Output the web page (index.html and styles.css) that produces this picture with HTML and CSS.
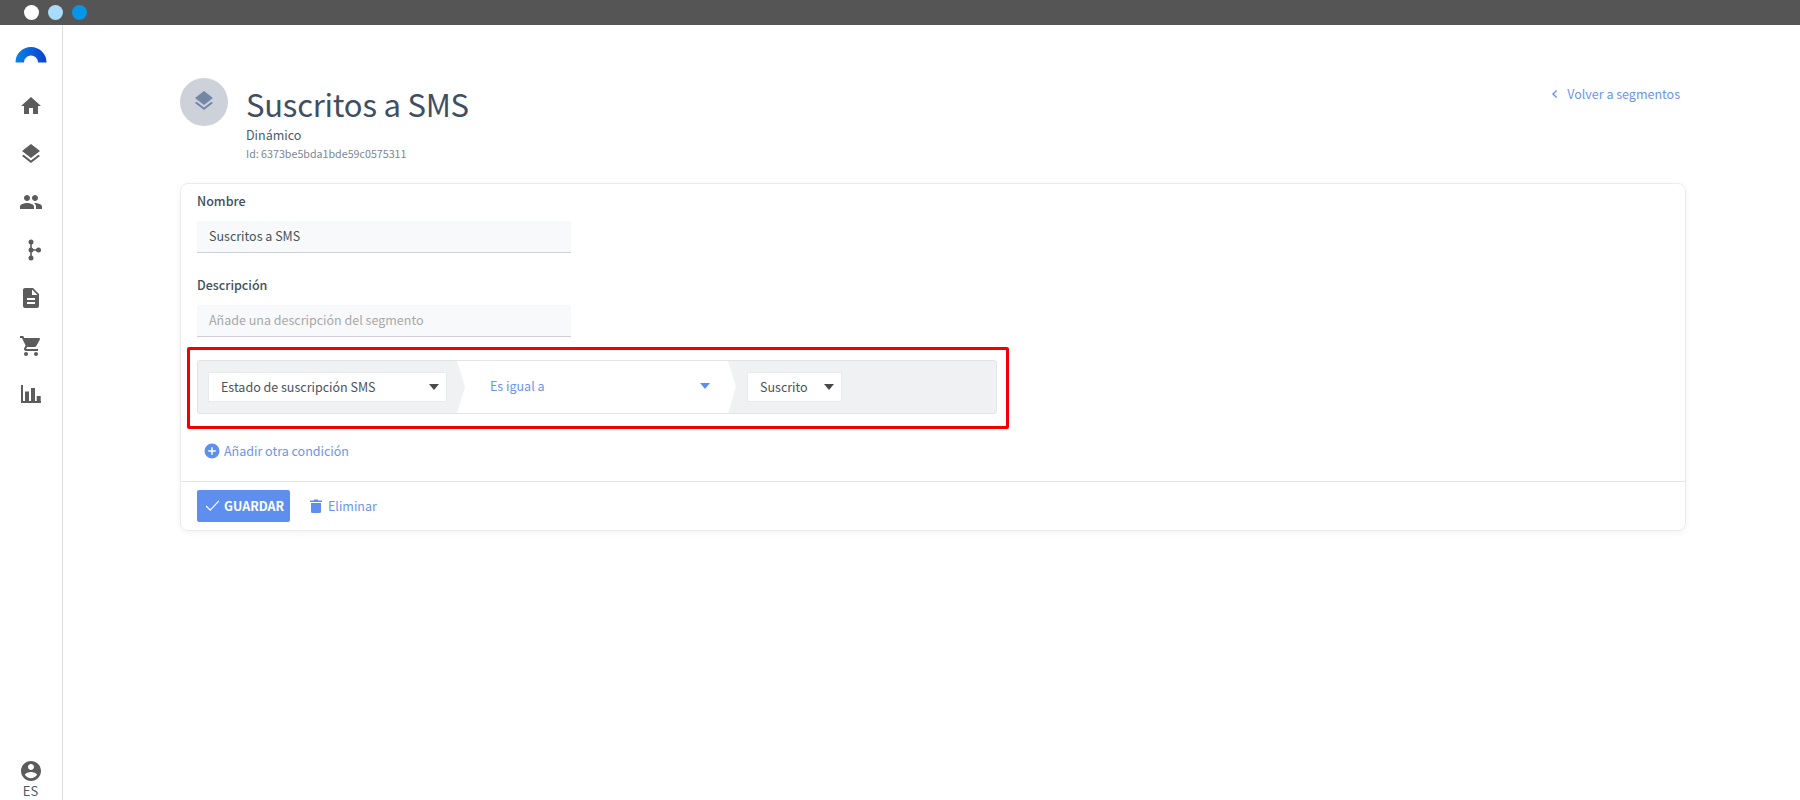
FILE: index.html
```html
<!DOCTYPE html>
<html lang="es">
<head>
<meta charset="utf-8">
<title>Suscritos a SMS</title>
<link rel="stylesheet" href="styles.css">
</head>
<body>
<div class="topbar"><span class="dot dot-white"></span><span class="dot dot-light"></span><span class="dot dot-blue"></span></div>
<div class="app">
  <nav class="sidebar">
    <svg class="logo" viewBox="0 0 32 17" width="32" height="17"><defs><linearGradient id="lg" x1="0" x2="1" y1="0" y2="0"><stop offset="0" stop-color="#0a84e6"/><stop offset="1" stop-color="#0a3fd0"/></linearGradient></defs><path d="M0.5 16.5A15.5 15.5 0 0 1 31.5 16.5H23A7 7 0 0 0 9 16.5Z" fill="url(#lg)"/></svg>
    <div class="nav-items">
      <svg class="nav-icon" viewBox="0 0 24 24"><path d="M10 20v-6h4v6h5v-8h3L12 3 2 12h3v8z"/></svg>
      <svg class="nav-icon" viewBox="0 0 24 24"><path d="M11.99 18.54l-7.37-5.73L3 14.07l9 7 9-7-1.63-1.27-7.38 5.74zM12 16l7.36-5.73L21 9l-9-7-9 7 1.63 1.27L12 16z"/></svg>
      <svg class="nav-icon" viewBox="0 0 24 24"><path d="M16 11c1.66 0 2.99-1.34 2.99-3S17.66 5 16 5c-1.66 0-3 1.34-3 3s1.34 3 3 3zm-8 0c1.66 0 2.99-1.34 2.99-3S9.66 5 8 5C6.34 5 5 6.34 5 8s1.34 3 3 3zm0 2c-2.33 0-7 1.17-7 3.5V19h14v-2.5c0-2.33-4.67-3.5-7-3.5zm8 0c-.29 0-.62.02-.97.05 1.16.84 1.97 1.97 1.97 3.45V19h6v-2.5c0-2.33-4.67-3.5-7-3.5z"/></svg>
      <svg class="nav-icon" viewBox="0 0 24 24"><circle cx="12" cy="4" r="2.5"/><circle cx="12" cy="12" r="2.5"/><circle cx="12" cy="20" r="2.5"/><circle cx="19.5" cy="12" r="2.5"/><path d="M11.2 4h1.600v16h-1.600zM12 11.200h7.500v1.600H12z"/></svg>
      <svg class="nav-icon" viewBox="0 0 24 24"><path d="M14 2H6c-1.100 0-2 .9-2 2v16c0 1.100.9 2 2 2h12c1.100 0 2-.9 2-2V8l-6-6zm2 16H8v-2h8v2zm0-4H8v-2h8v2zm-3-5V3.500L18.500 9H13z"/></svg>
      <svg class="nav-icon" viewBox="0 0 24 24"><path d="M7 18c-1.100 0-1.990.9-1.990 2S5.900 22 7 22s2-.9 2-2-.9-2-2-2zM1 2v2h2l3.600 7.590-1.350 2.450c-.16.280-.25.610-.25.960 0 1.100.9 2 2 2h12v-2H7.420c-.14 0-.25-.110-.25-.250l.03-.120.9-1.630h7.450c.75 0 1.410-.410 1.750-1.030l3.580-6.490A1 1 0 0 0 20.010 4H5.210l-.94-2H1zm16 16c-1.100 0-1.990.9-1.990 2s.89 2 1.990 2 2-.9 2-2-.9-2-2-2z"/></svg>
      <svg class="nav-icon" viewBox="0 0 24 24"><path d="M2 3h2v16h18v2H2zM6 9.600h4V19H6zM12 6h4v13h-4zM17.700 14h4v5h-4z"/></svg>
    </div>
    <div class="account">
      <svg class="nav-icon" viewBox="0 0 24 24"><path d="M12 2C6.480 2 2 6.480 2 12s4.480 10 10 10 10-4.480 10-10S17.520 2 12 2zm0 3c1.660 0 3 1.340 3 3s-1.340 3-3 3-3-1.340-3-3 1.340-3 3-3zm0 14.200c-2.500 0-4.710-1.280-6-3.220.03-1.990 4-3.080 6-3.080 1.990 0 5.970 1.090 6 3.080-1.290 1.940-3.500 3.220-6 3.220z"/></svg>
      <span class="lang">ES</span>
    </div>
  </nav>
  <main class="content">
    <header class="page-header">
      <div class="avatar"><svg viewBox="0 0 24 24" width="24" height="24"><path d="M11.990 18.540l-7.370-5.730L3 14.070l9 7 9-7-1.630-1.270-7.380 5.740zM12 16l7.360-5.730L21 9l-9-7-9 7 1.630 1.270L12 16z"/></svg></div>
      <div class="titles">
        <h1>Suscritos a SMS</h1>
        <div class="subtype">Dinámico</div>
        <div class="seg-id">Id: 6373be5bda1bde59c0575311</div>
      </div>
      <a class="back"><svg viewBox="0 0 10 12" width="8" height="10"><path d="M7 1.500L2.500 6 7 10.500" fill="none" stroke="currentColor" stroke-width="1.800"/></svg>Volver a segmentos</a>
    </header>
    <section class="card">
      <div class="card-body">
        <label class="field-label">Nombre</label>
        <div class="input">Suscritos a SMS</div>
        <label class="field-label label-second">Descripción</label>
        <div class="input input-second placeholder">Añade una descripción del segmento</div>
        <div class="condition">
          <div class="highlight"></div>
          <div class="select select-field">Estado de suscripción SMS<span class="caret"></span></div>
          <div class="operator">Es igual a<span class="caret caret-blue"></span></div>
          <div class="select select-value">Suscrito<span class="caret"></span></div>
        </div>
        <a class="add"><svg viewBox="0 0 24 24" width="18" height="18"><path d="M12 2a10 10 0 1 0 0 20 10 10 0 0 0 0-20zm5 11h-4v4h-2v-4H7v-2h4V7h2v4h4z"/></svg>Añadir otra condición</a>
      </div>
      <footer class="card-footer">
        <button class="save"><svg viewBox="0 0 16 12" width="15" height="11"><path d="M1 6.500L5.500 11 15 1" fill="none" stroke="#fff" stroke-width="1.300"/></svg>GUARDAR</button>
        <a class="delete"><svg viewBox="0 0 12 14" width="12" height="14"><path d="M1 4h10v8.500a1.500 1.500 0 0 1-1.500 1.500h-7A1.500 1.500 0 0 1 1 12.500zM0 1.500h3.500L4.300.5h3.400l.8 1h3.500V3H0z"/></svg>Eliminar</a>
      </footer>
    </section>
  </main>
</div>
</body>
</html>
```
FILE: styles.css
```css
* { box-sizing: border-box; }
html, body { margin: 0; height: 100%; }
body {
  background: #fff;
  color: #3f4b5b;
  font-family: "Noto Sans CJK JP", "Source Sans Pro", "Noto Sans", sans-serif;
  font-size: 12.5px;
  line-height: 20px;
  overflow: hidden;
}
.topbar {
  height: 25px;
  background: #555;
  display: flex;
  align-items: center;
  gap: 9px;
  padding-left: 24px;
}
.dot { width: 15px; height: 15px; border-radius: 50%; }
.dot-white { background: #fff; }
.dot-light { background: #a9dcfb; }
.dot-blue { background: #0795e8; }
.app { display: flex; height: 775px; }
.sidebar {
  width: 63px;
  flex: none;
  border-right: 1px solid #dcdcdc;
  display: flex;
  flex-direction: column;
  align-items: center;
  padding-right: 1px;
  padding-top: 21px;
}
.logo { display: block; }
.nav-items {
  display: flex;
  flex-direction: column;
  align-items: center;
  gap: 24px;
  margin-top: 31px;
}
.nav-icon { width: 24px; height: 24px; fill: #5c5c5c; display: block; }
.account {
  margin-top: auto;
  display: flex;
  flex-direction: column;
  align-items: center;
  padding-bottom: 2px;
}
.lang { font-size: 13px; line-height: 15px; color: #4c5966; }
.content { flex: 1; padding: 53px 114px 0 117px; }
.page-header { display: flex; height: 105px; }
.avatar {
  width: 48px;
  height: 48px;
  border-radius: 50%;
  background: #cdd2da;
  display: flex;
  align-items: center;
  justify-content: center;
  fill: #7488a6;
  flex: none;
  margin-right: 18px;
  padding-bottom: 2px;
}
.titles { flex: 1; }
h1 {
  margin: 4px 0 0;
  font-size: 31px;
  font-weight: 400;
  line-height: 43px;
  letter-spacing: -0.22px;
  color: #3f4f63;
}
.subtype { font-size: 12.5px; line-height: 20px; color: #4a5b6f; }
.seg-id { font-size: 10.7px; line-height: 16px; margin-top: 1px; color: #7a8694; }
.back {
  color: #6b94ee;
  display: flex;
  align-items: center;
  gap: 8px;
  height: 32px;
  margin-right: 6px;
}
.card {
  width: 1506px;
  height: 348px;
  border: 1px solid #ebebeb;
  border-radius: 8px;
  box-shadow: 0 2px 6px rgba(0,0,0,.05);
  display: flex;
  flex-direction: column;
}
.card-body { flex: 1; padding: 6px 16px 0; }
.field-label { display: block; font-weight: 500; line-height: 22px; color: #434f5c; }
.label-second { margin-top: 21px; }
.input {
  width: 374px;
  height: 32px;
  margin-top: 9px;
  padding: 0 12px;
  background: #f8f9fb;
  border-bottom: 1px solid #ccd0d6;
  line-height: 29px;
  color: #46535f;
}
.input-second { margin-top: 9px; }
.placeholder { color: #a8a8a8; }
.condition {
  position: relative;
  width: 800px;
  height: 54px;
  margin-top: 23px;
  background: #f0f1f3;
  border: 1px solid #e3e4e6;
  border-radius: 3px;
  display: flex;
  align-items: center;
  padding-left: 10px;
}
.highlight {
  position: absolute;
  left: -11px;
  right: -13px;
  top: -14px;
  bottom: -16px;
  border: 3px solid #f00000;
  border-radius: 2px;
  pointer-events: none;
}
.select {
  height: 30px;
  background: #fff;
  border: 1px solid #e9eaec;
  display: flex;
  align-items: center;
  justify-content: space-between;
  padding: 0 7px 0 12px;
  color: #46535f;
}
.select-field { width: 239px; }
.select-value { width: 95px; margin-left: 11px; }
.caret {
  width: 0;
  height: 0;
  border-left: 5px solid transparent;
  border-right: 5px solid transparent;
  border-top: 6px solid #4a4a4a;
}
.caret-blue { border-top-color: #5f8fee; margin-right: 26px; }
.operator {
  width: 279px;
  height: 52px;
  margin-left: 10px;
  background: #fff;
  clip-path: polygon(0 0, calc(100% - 8px) 0, 100% 50%, calc(100% - 8px) 100%, 0 100%, 8px 50%);
  display: flex;
  align-items: center;
  justify-content: space-between;
  padding-left: 33px;
  padding-bottom: 2px;
  color: #6b94ee;
}
.add {
  display: flex;
  align-items: center;
  gap: 3px;
  margin-top: 27px;
  margin-left: 6px;
  color: #6b94ee;
  fill: #5f8fee;
}
.card-footer {
  height: 49px;
  border-top: 1px solid #e4e4e4;
  display: flex;
  align-items: center;
  padding: 0 16px 1px;
  gap: 20px;
}
.save {
  width: 93px;
  height: 32px;
  border: 0;
  border-radius: 2px;
  background: #5f8fee;
  color: #fff;
  font: 700 12.5px/32px "Noto Sans CJK JP", sans-serif;
  display: flex;
  align-items: center;
  gap: 4px;
  padding: 0 0 0 8px;
}
.delete {
  display: flex;
  align-items: center;
  gap: 6px;
  color: #6b94ee;
  fill: #5f8fee;
}
```
